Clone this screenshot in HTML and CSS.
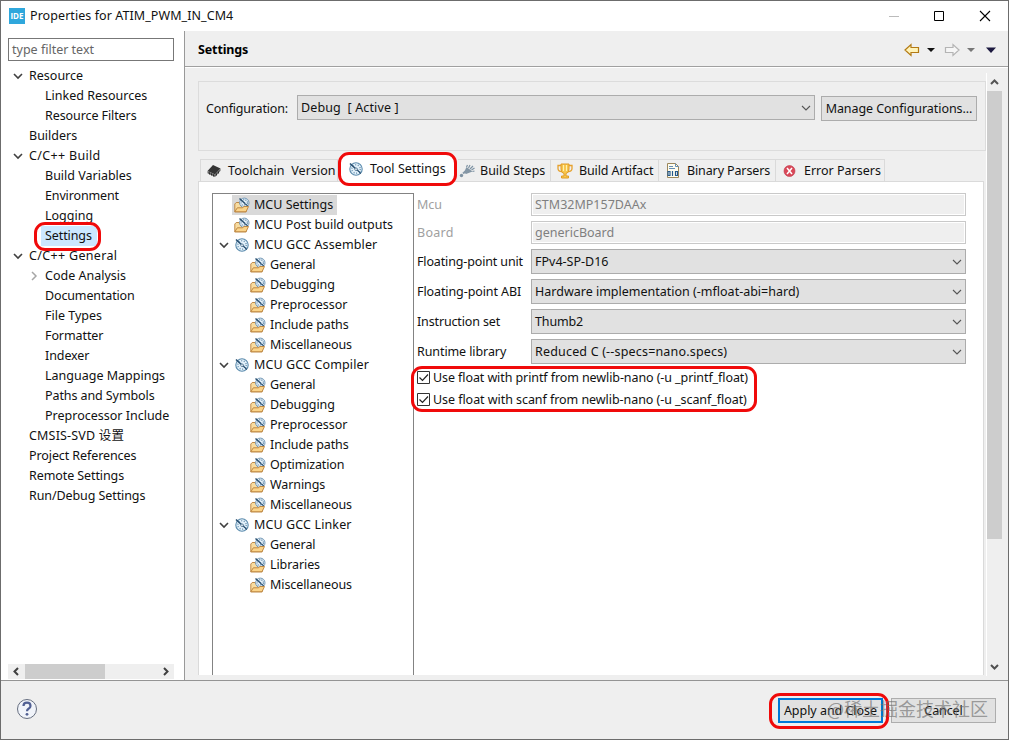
FILE: index.html
```html
<!DOCTYPE html>
<html lang="en">
<head>
<meta charset="utf-8">
<title>Properties for ATIM_PWM_IN_CM4</title>
<link rel="stylesheet" href="styles.css">
</head>
<body>
<svg class="defs" width="0" height="0">
  <defs>
    <symbol id="down" viewBox="0 0 10 10"><path d="M1 3l4 4 4-4" fill="none" stroke="#404040" stroke-width="1.6"/></symbol>
    <symbol id="combo" viewBox="0 0 10 10"><path d="M1 3l4 4 4-4" fill="none" stroke="#555" stroke-width="1.1"/></symbol>
    <symbol id="right" viewBox="0 0 10 10"><path d="M3 1l4 4-4 4" fill="none" stroke="#a6a6a6" stroke-width="1.5"/></symbol>
    <symbol id="gauge" viewBox="0 0 16 16">
      <circle cx="8" cy="8" r="6.2" fill="#e3f1fa" stroke="#5b8bad" stroke-width="1.1"/>
      <circle cx="8" cy="8" r="4.2" fill="none" stroke="#6f97b5" stroke-width="1.5" stroke-dasharray="1 1.64"/>
      <path d="M2 2.500l7 6.500" stroke="#294f70" stroke-width="1.7"/><path d="M8 9l5 2.500M9 7.500l3.500 5.500M9 9l3.500 3.500" stroke="#294f70" stroke-width=".8"/>
      <circle cx="8" cy="8.200" r="1.300" fill="#fff" stroke="#47708f" stroke-width=".8"/>
    </symbol>
    <symbol id="folder" viewBox="0 0 16 16">
      <path d="M.8 14.800V7l1.400-1.500h3l1 1.500h6v7.800z" fill="#f8dca0" stroke="#b9803a" stroke-width=".9"/>
      <circle cx="10.300" cy="5.800" r="4.700" fill="#e6f2fa" stroke="#6990b0" stroke-width=".9"/>
      <circle cx="10.300" cy="5.800" r="3.100" fill="none" stroke="#6489a8" stroke-width="1.3" stroke-dasharray="1 1.2"/>
      <path d="M5.500 1.500l5.500 5" stroke="#294f70" stroke-width="1.500"/><path d="M10.500 6l3.500 3M10 7l3.500 1" stroke="#294f70" stroke-width=".8"/>
      <path d="M.8 14.800l2.500-4h5l1.700-1.300h4.500L12 14.800z" fill="#fbd489" stroke="#b9803a" stroke-width=".9"/>
    </symbol>
  </defs>
</svg>
<div class="window">
  <header class="titlebar">
    <span class="ide">IDE</span><h1>Properties for ATIM_PWM_IN_CM4</h1>
    <svg class="winctl" width="104" height="14" viewBox="0 0 104 14"><path d="M2 7.500h10" stroke="#bbb"/><path d="M47.500 2.500h9v9h-9z" fill="none" stroke="#000"/><path d="M93 2l10 10M103 2L93 12" stroke="#000" stroke-width="1.100"/></svg>
  </header>
  <div class="middle">
    <aside class="nav">
      <div class="filter">type filter text</div>
      <ul class="navtree">
        <li class="l0"><svg><use href="#down"/></svg><span>Resource</span></li>
        <li class="l1"><span>Linked Resources</span></li>
        <li class="l1"><span class="narrow">Resource Filters</span></li>
        <li class="l0 leaf"><span>Builders</span></li>
        <li class="l0"><svg><use href="#down"/></svg><span class="wide3">C/C++ Build</span></li>
        <li class="l1"><span>Build Variables</span></li>
        <li class="l1"><span class="narrow2">Environment</span></li>
        <li class="l1"><span>Logging</span></li>
        <li class="l1 active"><span>Settings</span><i class="mark mark-nav"></i></li>
        <li class="l0"><svg><use href="#down"/></svg><span class="wide3">C/C++ General</span></li>
        <li class="l1 branch"><svg><use href="#right"/></svg><span>Code Analysis</span></li>
        <li class="l1"><span class="narrow2">Documentation</span></li>
        <li class="l1"><span>File Types</span></li>
        <li class="l1"><span class="narrow">Formatter</span></li>
        <li class="l1"><span class="narrow">Indexer</span></li>
        <li class="l1"><span>Language Mappings</span></li>
        <li class="l1"><span class="narrow">Paths and Symbols</span></li>
        <li class="l1"><span>Preprocessor Include</span></li>
        <li class="l0 leaf"><span class="wide2">CMSIS-SVD 设置</span></li>
        <li class="l0 leaf"><span class="narrow">Project References</span></li>
        <li class="l0 leaf"><span class="narrow">Remote Settings</span></li>
        <li class="l0 leaf"><span class="narrow">Run/Debug Settings</span></li>
      </ul>
      <div class="hscroll">
        <svg width="17" height="15" viewBox="0 0 17 15"><path d="M10 4L6.500 7.500 10 11" fill="none" stroke="#404040" stroke-width="2"/></svg>
        <b></b>
        <svg width="16" height="15" viewBox="0 0 16 15"><path d="M6 4l3.500 3.500L6 11" fill="none" stroke="#404040" stroke-width="2"/></svg>
      </div>
    </aside>
    <main class="main">
      <div class="heading"><h2>Settings</h2>
        <svg width="94" height="16" viewBox="0 0 94 16"><path d="M1 8l6-5.500V5.500h7.500v5H7v3z" fill="#fff3b8" stroke="#b37a14" stroke-width="1.200"/><path d="M23 6h8l-4 4z" fill="#111"/><path d="M55 8l-6-5.500V5.500h-7.500v5H49v3z" fill="#f6f6f6" stroke="#b4b4b4" stroke-width="1.200"/><path d="M63 6h8l-4 4z" fill="#777"/><path d="M82 5.500h10L87 11z" fill="#1d1a40"/></svg>
      </div>
      <div class="body">
        <div class="content">
          <section class="config">
            <label>Configuration:</label>
            <div class="select"><span class="wide">Debug&nbsp; [ Active ]</span><svg><use href="#combo"/></svg></div>
            <button class="manage"><span>Manage Configurations...</span></button>
          </section>
          <nav class="tabs">
            <div class="tab t1"><svg width="16" height="16" viewBox="0 0 16 16"><path d="M1.500 8L7 2l7.500 3.500L9 11.500z" fill="#343434"/><path d="M1.500 8L9 11.500l5.500-6v2.300L9 14 1.500 10.300z" fill="#636363"/><path d="M3.500 9.500v2M5.500 10.500v2M7.500 11.500v2M10.500 10.500v2M12.500 8.500v2" stroke="#222" stroke-width=".9"/></svg><span>Toolchain&nbsp; Version</span></div>
            <div class="tab t2"><i class="mark mark-tab"></i><svg width="16" height="16"><use href="#gauge"/></svg><span>Tool Settings</span></div>
            <div class="tab t3"><svg width="16" height="16" viewBox="0 0 16 16"><path d="M4 10.500l3-2.500" stroke="#8799a8" stroke-width="2"/><circle cx="2.500" cy="12.500" r="1.700" fill="#7f92a2"/><path d="M5 9.500L7.500 4l6 4.500-6.500 2.500z" fill="#8496a5"/><path d="M7.500 4l1-2M9.500 5l1.500-3M11 6l3-3M12.500 7l3-2M13.500 8.500l2-.5" stroke="#7d92a3" stroke-width="1.200"/></svg><span>Build Steps</span></div>
            <div class="tab t4"><svg width="16" height="16" viewBox="0 0 16 16"><path d="M4 2.500H1v3q0 3 4 3M12 2.500h3v3q0 3-4 3" fill="none" stroke="#e6a12e" stroke-width="1.300"/><path d="M4 1h8v5q0 4-3 4.500V13h2.500v2h-7v-2H7v-2.500Q4 10 4 6z" fill="#f7c64f" stroke="#e09a25"/><path d="M6.500 2v6M9.500 2v6" stroke="#fff0ae"/></svg><span>Build Artifact</span></div>
            <div class="tab t5"><svg width="16" height="16" viewBox="0 0 16 16"><path d="M2.500.5h8l3 3v11h-11z" fill="#fffdf0" stroke="#9b875b"/><path d="M10.500.5v3h3M4 3.500h4M4 5.500h6" fill="none" stroke="#668fb5"/><path d="M3 8.500h2v4H3zM7.500 8v5M10.500 8.500h2v4h-2z" fill="none" stroke="#24598c" stroke-width="1.200"/></svg><span>Binary Parsers</span></div>
            <div class="tab t6"><svg width="16" height="16" viewBox="0 0 16 16"><circle cx="7.500" cy="8" r="5.500" fill="#d94858" stroke="#bf3649" stroke-width=".6"/><path d="M5 5l5 6M10 5l-5 6" stroke="#fff" stroke-width="1.500"/></svg><span>Error Parsers</span></div>
          </nav>
          <section class="panel">
            <ul class="tooltree">
              <li class="root sel"><div><svg><use href="#folder"/></svg><span>MCU Settings</span></div></li>
              <li class="root"><svg><use href="#folder"/></svg><span>MCU Post build outputs</span></li>
              <li class="group"><svg class="arrow"><use href="#down"/></svg><svg><use href="#gauge"/></svg><span class="wide">MCU GCC Assembler</span></li>
              <li><svg><use href="#folder"/></svg><span class="narrow">General</span></li>
              <li><svg><use href="#folder"/></svg><span class="narrow">Debugging</span></li>
              <li><svg><use href="#folder"/></svg><span>Preprocessor</span></li>
              <li><svg><use href="#folder"/></svg><span class="narrow">Include paths</span></li>
              <li><svg><use href="#folder"/></svg><span class="narrow">Miscellaneous</span></li>
              <li class="group"><svg class="arrow"><use href="#down"/></svg><svg><use href="#gauge"/></svg><span class="wide">MCU GCC Compiler</span></li>
              <li><svg><use href="#folder"/></svg><span class="narrow">General</span></li>
              <li><svg><use href="#folder"/></svg><span class="narrow">Debugging</span></li>
              <li><svg><use href="#folder"/></svg><span>Preprocessor</span></li>
              <li><svg><use href="#folder"/></svg><span class="narrow">Include paths</span></li>
              <li><svg><use href="#folder"/></svg><span class="narrow2">Optimization</span></li>
              <li><svg><use href="#folder"/></svg><span class="narrow">Warnings</span></li>
              <li><svg><use href="#folder"/></svg><span class="narrow">Miscellaneous</span></li>
              <li class="group"><svg class="arrow"><use href="#down"/></svg><svg><use href="#gauge"/></svg><span class="wide">MCU GCC Linker</span></li>
              <li><svg><use href="#folder"/></svg><span class="narrow">General</span></li>
              <li><svg><use href="#folder"/></svg><span class="narrow">Libraries</span></li>
              <li><svg><use href="#folder"/></svg><span class="narrow">Miscellaneous</span></li>
            </ul>
            <div class="form">
              <div class="row off"><label>Mcu</label><div class="input"><span>STM32MP157DAAx</span></div></div>
              <div class="row off"><label class="board">Board</label><div class="input"><span>genericBoard</span></div></div>
              <div class="row"><label class="narrow2">Floating-point unit</label><div class="select"><span>FPv4-SP-D16</span><svg><use href="#combo"/></svg></div></div>
              <div class="row"><label class="narrow">Floating-point ABI</label><div class="select"><span>Hardware implementation (-mfloat-abi=hard)</span><svg><use href="#combo"/></svg></div></div>
              <div class="row"><label class="narrow2">Instruction set</label><div class="select"><span class="narrow2">Thumb2</span><svg><use href="#combo"/></svg></div></div>
              <div class="row"><label class="narrow">Runtime library</label><div class="select"><span class="wide2">Reduced C (--specs=nano.specs)</span><svg><use href="#combo"/></svg></div></div>
              <div class="checks">
                <i class="mark mark-checks"></i>
                <div class="check"><svg width="13" height="13" viewBox="0 0 13 13"><path d="M.5.5h12v12H.5z" fill="#fff" stroke="#333"/><path d="M2.500 6.500l3 3 5.500-6" fill="none" stroke="#222" stroke-width="1.200"/></svg><span class="narrow">Use float with printf from newlib-nano (-u _printf_float)</span></div>
                <div class="check"><svg width="13" height="13" viewBox="0 0 13 13"><path d="M.5.5h12v12H.5z" fill="#fff" stroke="#333"/><path d="M2.500 6.500l3 3 5.500-6" fill="none" stroke="#222" stroke-width="1.200"/></svg><span class="scanf">Use float with scanf from newlib-nano (-u _scanf_float)</span></div>
              </div>
            </div>
          </section>
        </div>
        <div class="vscroll">
          <svg width="15" height="18" viewBox="0 0 15 18"><path d="M4 11l3.500-3.500L11 11" fill="none" stroke="#555" stroke-width="2"/></svg>
          <b></b>
          <svg width="15" height="18" viewBox="0 0 15 18"><path d="M4 7l3.500 3.500L11 7" fill="none" stroke="#505050" stroke-width="2"/></svg>
        </div>
      </div>
    </main>
  </div>
  <footer class="footer">
    <svg width="22" height="22" viewBox="0 0 22 22"><circle cx="11" cy="11" r="9.500" fill="#f1f4fa" stroke="#666e80"/><path d="M7.500 8q0-3.300 3.500-3.300T14.500 8q0 1.500-2 2.700Q11 11.600 11 13.200" fill="none" stroke="#526194" stroke-width="2.200"/><circle cx="11" cy="16.300" r="1.400" fill="#526194"/></svg>
    <div class="actions"><button class="apply"><span>Apply and Close</span></button><button class="cancel"><span>Cancel</span></button><i class="mark mark-apply"></i><div class="watermark">@稀土掘金技术社区</div></div>
  </footer>
</div>
</body>
</html>
```
FILE: styles.css
```css
* { box-sizing: border-box; }
body { margin: 0; font: 12.5px/20px "Noto Sans", "Noto Sans CJK SC", sans-serif; color: #111; }
h1, h2, ul { margin: 0; padding: 0; font-size: inherit; font-weight: 400; list-style: none; }
button { font: inherit; color: inherit; padding: 0; white-space: nowrap; }
svg { flex: none; }
.narrow { letter-spacing: -.09px; }
.narrow2 { letter-spacing: -.14px; }
.scanf { letter-spacing: -.055px; }
.wide { letter-spacing: .12px; }
.wide2 { letter-spacing: .18px; }
.wide3 { letter-spacing: .33px; }
.defs { position: absolute; }
.window { width: 1009px; height: 740px; border: 1px solid #6c6c6c; background: #efefef; display: flex; flex-direction: column; overflow: hidden; }
.titlebar { height: 30px; flex: none; background: #fff; display: flex; align-items: center; padding: 0 17px 0 8px; }
.titlebar h1 { margin-left: 5px; flex: 1; white-space: nowrap; letter-spacing: .07px; }
.ide { width: 16px; height: 16px; background: #2fa7dc; color: #fff; font: bold 8px/16px "Open Sans", sans-serif; text-align: center; }
.middle { height: 650px; display: flex; border-bottom: 1px solid #949494; }
.nav { width: 184px; background: #fff; border-right: 1px solid #999; padding: 7px 0 0 7px; display: flex; flex-direction: column; }
.filter { width: 166px; height: 23px; border: 1px solid #777; padding-left: 3px; line-height: 21px; color: #666; flex: none; }
.navtree { margin-top: 5px; flex: 1; }
.navtree li { height: 20px; display: flex; align-items: center; position: relative; white-space: nowrap; }
.navtree svg { width: 10px; height: 10px; margin: 0 6px 0 5px; }
.navtree .leaf { padding-left: 21px; }
.l1 { padding-left: 37px; }
.navtree .branch { padding-left: 17px; }
.navtree .branch svg { margin-left: 4px; }
.navtree .active { padding-left: 33px; }
.active span { background: #cce8ff; padding: 0 5px 0 4px; letter-spacing: -.1px; }
.hscroll { width: 166px; height: 15px; flex: none; margin-bottom: 1px; background: #efefef; display: flex; justify-content: space-between; }
.hscroll b { width: 80px; margin-right: 53px; background: #cdcdcd; }
.main { flex: 1; display: flex; flex-direction: column; min-width: 0; }
.heading { height: 36px; border-bottom: 1px solid #a0a0a0; box-shadow: 0 1px #fff; padding: 2px 10px 0 13px; display: flex; align-items: center; justify-content: space-between; flex: none; }
.heading h2 { font-weight: 700; letter-spacing: -.12px; color: #000; padding-top: 1px; }
.body { display: flex; flex: 1; padding: 6px 6px 0 13px; min-height: 0; }
.content { width: 789px; height: 602px; padding-top: 8px; display: flex; flex-direction: column; }
.config { width: 788px; height: 70px; border: 1px solid #dcdcdc; display: flex; align-items: flex-start; padding: 13px 8px 0 7px; flex: none; }
.config label { width: 91px; line-height: 28px; letter-spacing: -.18px; }
.config .select { width: 518px; }
.select { height: 25px; border: 1px solid #acacac; background: #e1e1e1; display: flex; align-items: center; justify-content: space-between; padding: 0 3px; white-space: nowrap; }
.select svg { width: 10px; height: 10px; }
.manage { margin: 1px 0 0 6px; width: 156px; height: 25px; border: 1px solid #acacac; background: #e1e1e1; letter-spacing: -.06px; }
.tabs { display: flex; height: 22px; margin: 8px 0 0 2px; flex: none; }
.tab { display: flex; align-items: center; border: 1px solid #dadada; border-left: 0; border-bottom: 0; white-space: nowrap; }
.tab svg { margin: 0 6px; }
.t1 { width: 138px; border-left: 1px solid #dadada; }
.t1 svg { margin-left: 5px; }
.t1 span { letter-spacing: .06px; }
.t2 { width: 120px; position: relative; border: 0; }
.t2 svg { margin-left: 10px; margin-top: -3px; z-index: 2; }
.t2 span { margin-top: -2px; z-index: 2; letter-spacing: .05px; }
.t3 { width: 93px; }
.t3 svg { margin-left: 1px; margin-right: 5px; }
.t4 { width: 108px; }
.t4 svg { margin-right: 6px; }
.t4 span { letter-spacing: -.12px; }
.t5 { width: 117px; }
.t5 span { letter-spacing: -.12px; }
.t6 { width: 109px; }
.t6 svg { margin-right: 6px; }
.panel { width: 786px; flex: 1; min-height: 0; background: #fff; border: 1px solid #dadada; border-bottom: 0; display: flex; padding: 11px 17px 0 13px; }
.tooltree { width: 202px; border: 1px solid #838383; border-bottom: 0; padding-top: 1px; }
.tooltree li { height: 20px; display: flex; align-items: center; padding-left: 37px; white-space: nowrap; }
.tooltree svg { width: 16px; height: 16px; margin-right: 4px; }
.tooltree .root { padding-left: 21px; }
.tooltree .sel { padding-left: 19px; }
.sel div { display: flex; align-items: center; background: #d9d9d9; padding: 0 4px 0 2px; }
.tooltree .group { padding-left: 6px; }
.tooltree .arrow { width: 10px; height: 10px; margin-right: 5px; }
.form { width: 552px; padding-left: 3px; }
.row { display: flex; height: 25px; margin-bottom: 5px; align-items: center; }
.row label { width: 114px; white-space: nowrap; }
.row .select, .input { width: 435px; }
.off { height: 23px; color: #7f7f7f; }
.off label { color: #a0a0a0; }
.off .board { letter-spacing: .3px; }
.input { height: 23px; background: #efefef; border: 1px solid #c9c9c9; box-shadow: inset 0 0 0 1px #fff; line-height: 21px; padding-left: 3px; }
.checks { position: relative; margin-top: -2px; }
.check { height: 22px; display: flex; align-items: center; gap: 3px; white-space: nowrap; }
.check svg { margin-top: -1px; }
.mark { position: absolute; border: 3px solid #f00a0a; border-radius: 11px; }
.mark-nav { left: 26px; top: -4px; width: 67px; height: 29px; }
.mark-tab { left: 0; top: -7px; width: 119px; height: 34px; background: #fff; z-index: 1; }
.mark-checks { left: -6px; top: -1px; width: 346px; height: 46px; }
.mark-apply { left: -9px; top: -5px; width: 120px; height: 36px; }
.vscroll { width: 15px; display: flex; flex-direction: column; box-shadow: -1px 0 #fff; height: 603px; }
.vscroll b { height: 448px; background: #cdcdcd; margin-bottom: auto; }
.footer { height: 58px; flex: none; padding: 0 12px 0 15px; display: flex; align-items: flex-start; justify-content: space-between; }
.footer > svg { margin-top: 17px; }
.actions { position: relative; display: flex; gap: 8px; margin-top: 17px; }
.actions button { width: 105px; height: 25px; background: #e1e1e1; border: 1px solid #adadad; }
.actions .apply { border: 2px solid #0078d7; letter-spacing: -.03px; }
.actions .cancel { letter-spacing: -.1px; }
.watermark { position: absolute; left: 49px; top: -5px; font: 18px/30px "Noto Sans CJK SC", sans-serif; color: rgba(110,110,110,.65); white-space: nowrap; }
```
